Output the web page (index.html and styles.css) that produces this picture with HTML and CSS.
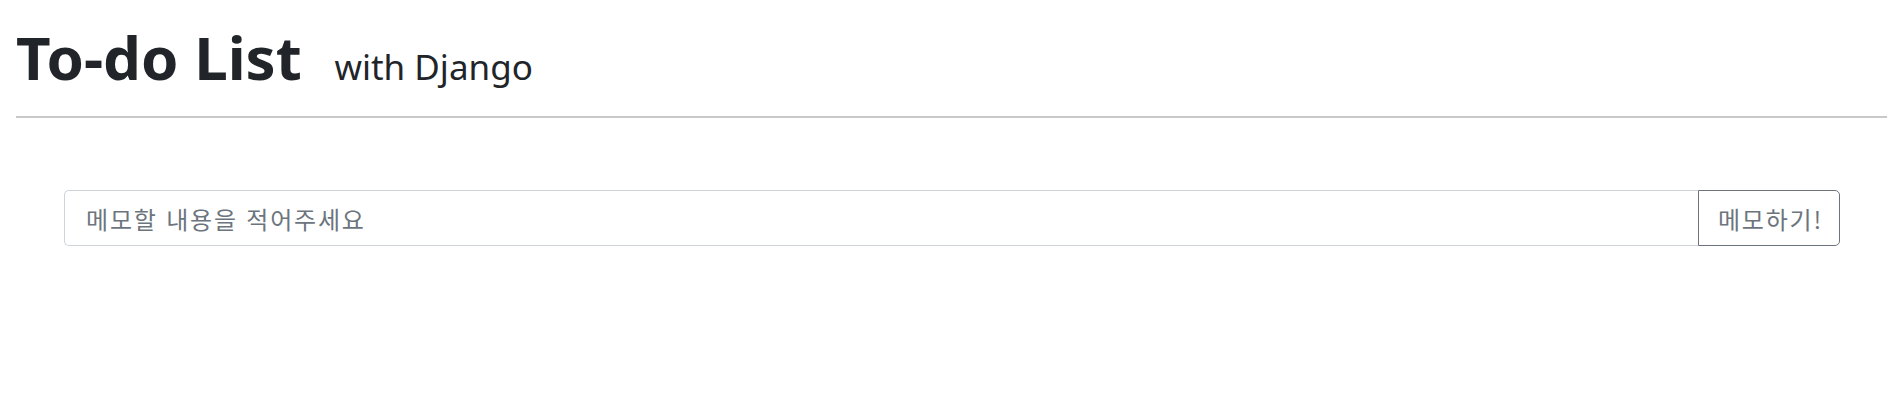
FILE: index.html
```html
<!DOCTYPE html>
<html lang="ko">
<head>
<meta charset="utf-8">
<title>To-do List</title>
<link rel="stylesheet" href="styles.css">
</head>
<body>
<header class="page-header">
  <h1 class="title">To-do List <small class="subtitle">with Django</small></h1>
</header>
<hr class="divider">
<main class="content">
  <form class="memo-form">
    <input class="memo-input" type="text" placeholder="메모할 내용을 적어주세요">
    <button class="memo-button" type="button">메모하기!</button>
  </form>
</main>
</body>
</html>
```
FILE: styles.css
```css
html, body {
  margin: 0;
  padding: 0;
  background: #ffffff;
}
body {
  font-family: "Noto Sans", "Noto Sans CJK KR", sans-serif;
  color: #212529;
}
.page-header {
  padding: 19px 0 0 16px;
}
.title {
  margin: 0;
  font-size: 60px;
  font-weight: 700;
  line-height: 76px;
  color: #212529;
  white-space: nowrap;
}
.subtitle {
  font-size: 35px;
  font-weight: 400;
  margin-left: 17px;
  color: #212529;
}
.divider {
  margin: 11px 6px 0 16px;
  border: 0;
  border-top: 2px solid #c8c8c8;
  height: 0;
}
.content {
  padding: 72px 53px 0 64px;
}
.memo-form {
  display: flex;
  height: 56px;
}
.memo-input {
  flex: 1;
  min-width: 0;
  box-sizing: border-box;
  height: 56px;
  margin: 0;
  padding: 0 20px 0 21px;
  border: 1px solid #ced4da;
  border-right: 0;
  border-radius: 5px 0 0 5px;
  font-family: "Noto Sans CJK KR", "Noto Sans", sans-serif;
  font-size: 24px;
  letter-spacing: 1.8px;
  color: #495057;
  outline: none;
}
.memo-input::placeholder {
  color: #6c757d;
}
.memo-button {
  box-sizing: border-box;
  height: 56px;
  margin: 0;
  padding: 0 16px 0 19px;
  border: 1px solid #6c757d;
  border-radius: 0 5px 5px 0;
  background: #ffffff;
  color: #6c757d;
  font-family: "Noto Sans CJK KR", "Noto Sans", sans-serif;
  font-size: 24px;
  letter-spacing: 1.8px;
  cursor: pointer;
}
```
